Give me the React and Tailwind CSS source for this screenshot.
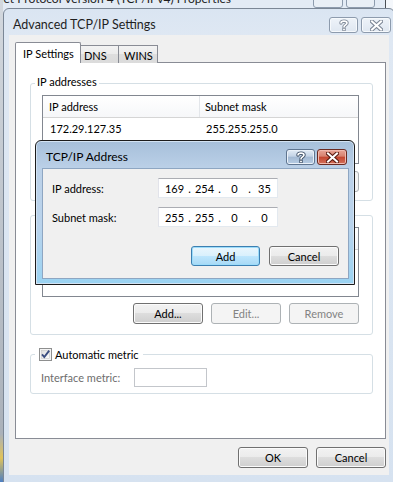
import React from 'react';

const FONT = "font-['Lato','Liberation_Sans',sans-serif]";

function Btn({ children, w = 'w-[70px]', h = 'h-[21px]', variant = 'normal' }) {
  const styles = {
    normal:
      'border-[#707070] text-black bg-[linear-gradient(#f2f2f2,#ebebeb_50%,#dddddd_50%,#cfcfcf)] shadow-[inset_0_0_0_1px_#fbfbfb]',
    def: 'border-[#3c7fb1] text-black bg-[linear-gradient(#eaf6fd,#d9f0fc_50%,#bee6fd_50%,#a7d9f5)] shadow-[inset_0_0_0_1px_#9cdcfa]',
    disabled: 'border-[#adb2b5] text-[#838383] bg-[#f4f4f4]',
  };
  return (
    <div className={`${w} ${h} flex items-center justify-center rounded-[3px] border ${styles[variant]}`}>
      {children}
    </div>
  );
}

function HelpGlyph({ color = '#5a6b80' }) {
  return (
    <svg width="10" height="12" viewBox="0 0 10 12">
      <path d="M2 4 C2 1.5 8 1.5 8 4 C8 5.8 5 6 5 8" fill="none" stroke={color} strokeWidth="3.4" strokeLinecap="round" />
      <path d="M2 4 C2 1.5 8 1.5 8 4 C8 5.8 5 6 5 8" fill="none" stroke="#fff" strokeWidth="1.6" strokeLinecap="round" />
      <rect x="3.3" y="9" width="3.4" height="3" rx="0.6" fill={color} />
      <rect x="4.1" y="9.7" width="1.8" height="1.6" fill="#fff" />
    </svg>
  );
}

function CloseGlyph({ color = '#5a6b80' }) {
  return (
    <svg width="13" height="11" viewBox="0 0 13 11">
      <path d="M2 1.5 L11 9.5 M11 1.5 L2 9.5" stroke={color} strokeWidth="4.2" strokeLinecap="square" />
      <path d="M2 1.5 L11 9.5 M11 1.5 L2 9.5" stroke="#fff" strokeWidth="2" strokeLinecap="square" />
    </svg>
  );
}

function CaptionButtons({ active }) {
  if (active) {
    return (
      <div className="flex gap-[2px]">
        <div className="w-[29px] h-[16px] flex items-center justify-center rounded-[3px] border border-[#5f7590] bg-[linear-gradient(#e3ecf6,#c3d3e6_45%,#a3b9d3_50%,#b7cde4)] shadow-[inset_0_0_0_1px_#eaf1f9]">
          <HelpGlyph color="#3d4f66" />
        </div>
        <div className="w-[30px] h-[16px] flex items-center justify-center rounded-[3px] border border-[#6b2a21] bg-[linear-gradient(#e8a597,#d7816f_45%,#c4452f_50%,#d2705a)] shadow-[inset_0_0_0_1px_#f0b9ae]">
          <CloseGlyph color="#5b1b12" />
        </div>
      </div>
    );
  }
  return (
    <div className="flex gap-[3px]">
      <div className="w-[29px] h-[16px] flex items-center justify-center rounded-[3px] border border-[#8d9bad] bg-[linear-gradient(#eef3f9,#dfe7f1)] shadow-[inset_0_0_0_1px_#f6f9fc]">
        <HelpGlyph color="#7d8796" />
      </div>
      <div className="w-[30px] h-[16px] flex items-center justify-center rounded-[3px] border border-[#8d9bad] bg-[linear-gradient(#eef3f9,#dfe7f1)] shadow-[inset_0_0_0_1px_#f6f9fc]">
        <CloseGlyph color="#7d8796" />
      </div>
    </div>
  );
}

function ListView({ h, rows }) {
  return (
    <div className={`ml-[11px] w-[317px] ${h} border border-[#828790] bg-white`}>
      <div className="flex h-[22px] border-b border-[#d5d5d5] bg-[linear-gradient(#ffffff,#f6f7f9)]">
        <div className="w-[157px] pl-[6px] flex items-center border-r border-[#e3e6ea]">IP address</div>
        <div className="pl-[5px] flex items-center">Subnet mask</div>
      </div>
      {rows.map((r) => (
        <div key={r[0]} className="flex h-[20px] items-center">
          <div className="w-[158px] pl-[7px]">{r[0]}</div>
          <div className="pl-[5px]">{r[1]}</div>
        </div>
      ))}
    </div>
  );
}

function Checkbox() {
  return (
    <svg width="13" height="13" viewBox="0 0 13 13">
      <defs>
        <linearGradient id="cb" x1="0" y1="0" x2="1" y2="1">
          <stop offset="0" stopColor="#dcdcdc" />
          <stop offset="1" stopColor="#ffffff" />
        </linearGradient>
      </defs>
      <rect x="0.5" y="0.5" width="12" height="12" fill="#f4f4f4" stroke="#8e8f8f" />
      <rect x="2.5" y="2.5" width="8" height="8" fill="url(#cb)" stroke="#c8c8c8" strokeWidth="0.6" />
      <path d="M3 6.3 L5.3 9 L10.2 2.6" fill="none" stroke="#3b4d80" strokeWidth="1.9" />
    </svg>
  );
}

function IpField({ parts }) {
  return (
    <div className="w-[120px] h-[20px] flex items-center pl-[4px] bg-white border border-[#e3e9ef] border-t-[#abadb3] border-l-[#e2e3ea]">
      {parts.map((p, i) => (
        <React.Fragment key={i}>
          {i > 0 && <span className="w-[7px] text-center">.</span>}
          <span className="w-[23px] text-center">{p}</span>
        </React.Fragment>
      ))}
    </div>
  );
}

export default function App() {
  return (
    <div className={`relative w-[393px] h-[482px] overflow-hidden bg-[#f4f7fb] text-[11px] leading-[15px] text-black ${FONT}`}>
      {/* window behind */}
      <div className="absolute left-0 top-[-20px] w-[386px] h-[540px] border-r border-[#4b4f55] bg-[#e3ebf5]">
        <div className="absolute left-[-28px] top-[11px] whitespace-nowrap text-[12px] text-[#1e1e1e]">
          Internet Protocol Version 4 (TCP/IPv4) Properties
        </div>
        <div className="absolute left-[313px] top-[8px] flex gap-[3px]">
          <div className="w-[30px] h-[20px] rounded-[3px] border border-[#8d9bad] bg-[#e9eff6]" />
          <div className="w-[29px] h-[20px] rounded-[3px] border border-[#8d9bad] bg-[#e9eff6]" />
        </div>
      </div>
      <div className="absolute left-0 top-0 w-[3px] h-full bg-[linear-gradient(#d3d8de,#aab1ba_90%,#e0c35a_95%,#4d7fc2)]" />

      {/* Advanced TCP/IP Settings */}
      <div className="absolute left-[3px] top-[8px] w-[392px] h-[476px] flex flex-col rounded-t-[6px] border border-[#7b8796] bg-[linear-gradient(#dae5f2,#dfe8f3_30px,#d6e2f0)] px-[5px] pb-[8px]">
        <div className="h-[26px] flex items-start justify-between pt-[8px] pl-[4px] -mr-[2px]">
          <div className="text-[12.5px] text-[#1f1f1f]">Advanced TCP/IP Settings</div>
          <CaptionButtons />
        </div>
        <div className="flex-1 bg-[#f0f0f0] pt-[7px] pl-[6px] pr-[3px]">
          {/* tabs */}
          <div className="flex items-end h-[21px]">
            <div className="relative z-10 w-[66px] h-[21px] flex items-center pl-[7px] bg-white border border-b-0 border-[#898c95] rounded-t-[2px]">
              IP Settings
            </div>
            <div className="w-[38px] h-[18px] flex items-center pl-[3px] pt-[2px] border border-b-0 border-l-0 border-[#898c95] bg-[linear-gradient(#f3f3f3,#ebebeb_50%,#dedede_50%,#dbdbdb)]">
              DNS
            </div>
            <div className="w-[39px] h-[18px] flex items-center pl-[5px] pt-[2px] border border-b-0 border-l-0 border-[#898c95] bg-[linear-gradient(#f3f3f3,#ebebeb_50%,#dedede_50%,#dbdbdb)]">
              WINS
            </div>
          </div>
          {/* panel */}
          <div className="-mt-[1px] w-[371px] h-[377px] border border-[#898c95] bg-white pl-[14px] pt-[20px]">
            <div className="w-[343px] rounded-[3px] border border-[#d5dfe5] pb-[8px]">
              <div className="w-fit ml-[4px] px-[2px] -mt-[10px] bg-white">IP addresses</div>
              <div className="mt-[6px]">
                <ListView h="h-[69px]" rows={[['172.29.127.35', '255.255.255.0']]} />
              </div>
              <div className="ml-[11px] w-[317px] mt-[7px] flex justify-end gap-[8px]">
                <Btn>Add...</Btn>
                <Btn variant="disabled">Edit...</Btn>
                <Btn variant="disabled">Remove</Btn>
              </div>
            </div>

            <div className="mt-[14px] w-[343px] rounded-[3px] border border-[#d5dfe5] pb-[10px]">
              <div className="w-fit ml-[4px] px-[2px] -mt-[10px] bg-white">Default gateways:</div>
              <div className="mt-[6px]">
                <ListView h="h-[70px]" rows={[]} />
              </div>
              <div className="ml-[11px] w-[317px] mt-[6px] flex justify-end gap-[8px]">
                <Btn>Add...</Btn>
                <Btn variant="disabled">Edit...</Btn>
                <Btn variant="disabled">Remove</Btn>
              </div>
            </div>

            <div className="mt-[19px] w-[343px] rounded-[3px] border border-[#d5dfe5] pb-[6px]">
              <div className="w-fit ml-[4px] px-[4px] -mt-[8px] h-[15px] flex items-center gap-[3px] bg-white">
                <Checkbox />
                <span>Automatic metric</span>
              </div>
              <div className="mt-[6px] h-[19px] flex items-center pl-[10px]">
                <span className="w-[93px] text-[#6d6d6d]">Interface metric:</span>
                <div className="w-[73px] h-[19px] bg-white border border-[#c3c6cb]" />
              </div>
            </div>
          </div>
          <div className="mt-[8px] flex justify-end gap-[8px]">
            <Btn>OK</Btn>
            <Btn>Cancel</Btn>
          </div>
        </div>
      </div>

      {/* TCP/IP Address dialog */}
      <div className="absolute left-[35px] top-[140px] w-[320px] h-[145px] flex flex-col rounded-t-[6px] border border-[#1c1c1c] bg-[linear-gradient(#a6bfda,#bcd1e8_20%,#b9d3ec_60%,#9ad3f2)] shadow-[inset_0_0_0_1px_#d3e3f3] pl-[6px] pr-[5px] pb-[5px]">
        <div className="h-[27px] flex items-start justify-between pt-[8px] pl-[4px] pr-[2px]">
          <div className="text-[12px] text-black">TCP/IP Address</div>
          <CaptionButtons active />
        </div>
        <div className="flex-1 border border-[#8ea6c2] bg-[#f0f0f0] pt-[9px] pl-[9px] pr-[9px]">
          <div className="flex items-center h-[20px]">
            <span className="w-[106px]">IP address:</span>
            <IpField parts={['169', '254', '0', '35']} />
          </div>
          <div className="flex items-center h-[20px] mt-[9px]">
            <span className="w-[106px]">Subnet mask:</span>
            <IpField parts={['255', '255', '0', '0']} />
          </div>
          <div className="mt-[19px] flex justify-end gap-[9px]">
            <Btn w="w-[69px]" h="h-[20px]" variant="def">Add</Btn>
            <Btn h="h-[20px]">Cancel</Btn>
          </div>
        </div>
      </div>
    </div>
  );
}
